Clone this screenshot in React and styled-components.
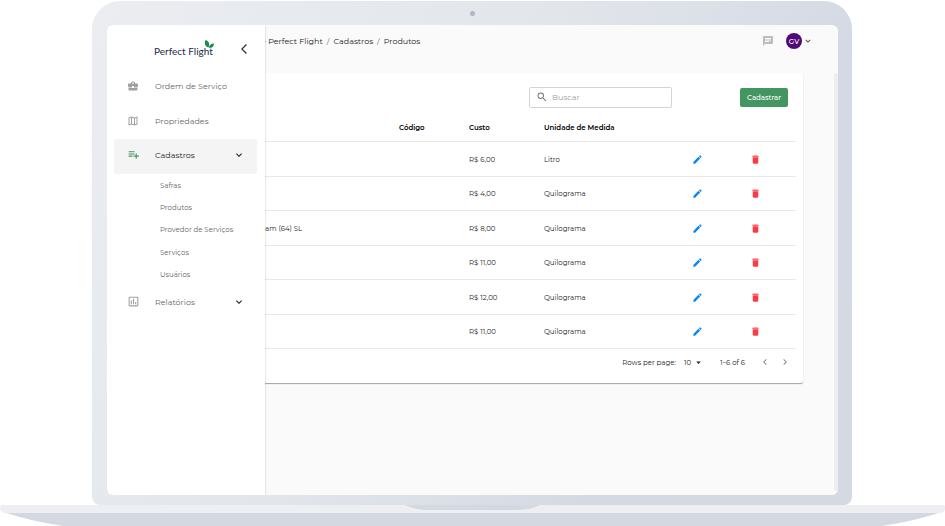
import React, { useState } from 'react';
import styled, { createGlobalStyle } from 'styled-components';
import {
  MdBusinessCenter,
  MdOutlineMap,
  MdPlaylistAdd,
  MdOutlineAssessment,
  MdExpandMore,
  MdArrowBackIosNew,
  MdChat,
  MdSearch,
  MdEdit,
  MdDelete,
  MdArrowDropDown,
  MdChevronLeft,
  MdChevronRight,
} from 'react-icons/md';

const colors = {
  green: '#43965f',
  purple: '#4f0a76',
  blue: '#0d86f0',
  red: '#fb3b41',
  text: '#222222',
  muted: '#666666',
  icon: '#a0a0a0',
  line: '#e8e8e8',
  page: '#fafafa',
};

const GlobalStyle = createGlobalStyle`
  * {
    box-sizing: border-box;
  }

  body {
    margin: 0;
    background-color: #ffffff;
    font-family: Montserrat, Inter, sans-serif;
    font-size: 7px;
    color: ${colors.text};
  }

  button, input, select {
    font-family: inherit;
    font-size: inherit;
    color: inherit;
    margin: 0;
    padding: 0;
    border: 0;
    background: none;
  }

  a {
    color: inherit;
    text-decoration: none;
  }

  svg {
    display: block;
    flex-shrink: 0;
  }
`;

const Laptop = styled.div`
  display: flex;
  flex-direction: column;
  min-height: 100vh;
  padding-top: 1px;
`;

const Lid = styled.div`
  flex: 1;
  display: flex;
  flex-direction: column;
  margin: 0 93px 0 92px;
  padding: 0 14px 10px 15px;
  border-radius: 28px 28px 8px 8px;
  background: linear-gradient(120deg, #ebedf1 0%, #e2e6eb 45%, #d5d9e3 75%, #d4d9e2 100%);
`;

const Bezel = styled.div`
  height: 24px;
  display: flex;
  align-items: center;
  justify-content: center;
`;

const Camera = styled.div`
  width: 5px;
  height: 5px;
  border-radius: 50%;
  background-color: #b2b6c1;
`;

const Screen = styled.div`
  flex: 1;
  display: flex;
  overflow: hidden;
  border-radius: 6px;
  background-color: ${colors.page};
`;

const Base = styled.svg`
  width: 100%;
  height: 21px;
`;

const Sidebar = styled.aside`
  width: 158px;
  flex-shrink: 0;
  padding: 0 8px 0 7px;
  background-color: #ffffff;
  box-shadow: 0 0 2px rgba(0, 0, 0, 0.25);
  z-index: 1;
`;

const Brand = styled.div`
  display: flex;
  align-items: center;
  justify-content: space-between;
  height: 43px;
  padding: 4px 7px 0 39px;
`;

const BrandLink = styled.a`
  display: flex;
`;

const Nav = styled.nav`
  display: flex;
  flex-direction: column;
`;

const NavItem = styled.button`
  display: flex;
  align-items: center;
  width: 100%;
  height: ${props => props.$height || '35px'};
  padding: 0 12px ${props => (props.$active ? '4px' : '0')} 13px;
  border-radius: 2px;
  background-color: ${props => (props.$active ? '#f4f4f4' : 'transparent')};
  color: ${props => (props.$active ? colors.text : colors.muted)};
  font-size: 8px;
  text-align: left;
  cursor: pointer;
`;

const NavIcon = styled.span`
  width: 28px;
  color: ${props => (props.$active ? colors.green : colors.icon)};
`;

const NavLabel = styled.span`
  flex: 1;
`;

const SubNav = styled.div`
  display: grid;
  grid-auto-rows: 1fr;
  align-items: center;
  height: 112px;
  padding-left: 46px;
  color: ${colors.muted};
`;

const Main = styled.main`
  flex: 1;
  min-width: 0;
  display: flex;
  flex-direction: column;
`;

const TopBar = styled.header`
  display: flex;
  align-items: center;
  justify-content: space-between;
  height: 48px;
  padding: 0 25px 16px 0;
`;

/* the drawer covers the start of the trail */
const Breadcrumb = styled.nav`
  display: flex;
  gap: 4px;
  margin-left: -2px;
  font-size: 8px;
  color: ${colors.text};
`;

const Slash = styled.span`
  color: ${colors.muted};
`;

const Account = styled.div`
  display: flex;
  align-items: center;
  gap: 12px;
`;

const AccountButton = styled.button`
  display: flex;
  align-items: center;
  gap: 1px;
  color: #444444;
  cursor: pointer;
`;

const Avatar = styled.span`
  display: flex;
  align-items: center;
  justify-content: center;
  width: 16px;
  height: 16px;
  border-radius: 50%;
  background-color: ${colors.purple};
  color: #ffffff;
  font-weight: 500;
`;

const Content = styled.div`
  flex: 1;
  display: flex;
  align-items: flex-start;
`;

const Panel = styled.section`
  flex: 1;
  min-width: 0;
  margin-right: 31px;
  padding-right: 7px;
  border-radius: 0 2px 2px 0;
  background-color: #ffffff;
  box-shadow: 0 1px 1px rgba(0, 0, 0, 0.35);
`;

const ScrollTrack = styled.div`
  align-self: stretch;
  width: 4px;
  margin-bottom: 4px;
  border-radius: 2px;
  background-color: #eeeeee;
`;

const Toolbar = styled.div`
  display: flex;
  align-items: center;
  justify-content: flex-end;
  gap: 68px;
  height: 40px;
  padding: 8px 8px 0 0;
`;

const SearchBox = styled.label`
  display: flex;
  align-items: center;
  gap: 4px;
  width: 143px;
  height: 21px;
  padding: 0 6px;
  border: 1px solid #d4d4d4;
  border-radius: 2px;
  color: #777777;

  input {
    flex: 1;
    min-width: 0;
    font-size: 8px;
    outline: none;
  }

  input::placeholder {
    color: #a2a2a2;
    opacity: 1;
  }
`;

const AddButton = styled.button`
  width: 48px;
  height: 19px;
  border-radius: 2px;
  background-color: ${colors.green};
  color: #ffffff;
  font-weight: 500;
  cursor: pointer;
`;

const Table = styled.table`
  width: 100%;
  table-layout: fixed;
  border-collapse: separate;
  border-spacing: 0;

  th, td {
    padding: 0;
    border-bottom: 1px solid ${colors.line};
    text-align: left;
    white-space: nowrap;
  }

  th {
    height: 29px;
    color: #000000;
    font-weight: 600;
  }

  tbody tr:nth-child(odd) {
    height: 35px;
  }

  tbody tr:nth-child(even) {
    height: 34px;
  }
`;

const Col = styled.col`
  width: ${props => props.$width || 'auto'};
`;

const IconButton = styled.button`
  display: flex;
  align-items: center;
  justify-content: center;
  color: ${props => props.$color || '#8a8a8a'};
  cursor: pointer;
`;

const Pagination = styled.div`
  display: flex;
  align-items: center;
  justify-content: flex-end;
  height: 34px;
  padding: 0 5px 8px 0;
`;

const RowsSelect = styled.label`
  display: flex;
  align-items: center;

  select {
    appearance: none;
    width: 9px;
    margin-left: 8px;
    outline: none;
  }
`;

const Range = styled.span`
  margin: 0 14px 0 16px;
`;

const Pager = styled.div`
  display: flex;
  gap: 8px;
`;

const subItems = ['Safras', 'Produtos', 'Provedor de Serviços', 'Serviços', 'Usuários'];

const products = [
  { id: 1, name: '', price: 'R$ 6,00', unit: 'Litro' },
  { id: 2, name: '', price: 'R$ 4,00', unit: 'Quilograma' },
  { id: 3, name: 'am (64) SL', price: 'R$ 8,00', unit: 'Quilograma' },
  { id: 4, name: '', price: 'R$ 11,00', unit: 'Quilograma' },
  { id: 5, name: '', price: 'R$ 12,00', unit: 'Quilograma' },
  { id: 6, name: '', price: 'R$ 11,00', unit: 'Quilograma' },
];

function Logo() {
  return (
    <svg width="62" height="20" viewBox="0 0 62 20">
      <text x="1" y="16" fontFamily="Lato, sans-serif" fontSize="10" fill="#252a4c">
        Perfect Flight
      </text>
      <path d="M52.500 1c3.500 1 4.500 4 3 7.500-3.500-1-4.500-4-3-7.500z" fill="#1f8a50" />
      <path d="M61 4.500c0 3-2 4.500-5 4.500 0-3 2-4.500 5-4.500z" fill="#1f8a50" />
    </svg>
  );
}

function SideMenu() {
  const [open, setOpen] = useState(true);

  return (
    <Sidebar>
      <Brand>
        <BrandLink href="#" aria-label="Perfect Flight"><Logo /></BrandLink>
        <IconButton $color="#333333" aria-label="Fechar menu">
          <MdArrowBackIosNew size={12} />
        </IconButton>
      </Brand>
      <Nav>
        <NavItem>
          <NavIcon><MdBusinessCenter size={12} /></NavIcon>
          <NavLabel>Ordem de Serviço</NavLabel>
        </NavItem>
        <NavItem $height="36px">
          <NavIcon><MdOutlineMap size={12} /></NavIcon>
          <NavLabel>Propriedades</NavLabel>
        </NavItem>
        <NavItem $active aria-expanded={open} onClick={() => setOpen(!open)}>
          <NavIcon $active><MdPlaylistAdd size={13} /></NavIcon>
          <NavLabel>Cadastros</NavLabel>
          <MdExpandMore size={12} />
        </NavItem>
        {open && (
          <SubNav>
            {subItems.map(item => <a key={item} href="#">{item}</a>)}
          </SubNav>
        )}
        <NavItem $height="31px">
          <NavIcon><MdOutlineAssessment size={13} /></NavIcon>
          <NavLabel>Relatórios</NavLabel>
          <MdExpandMore size={12} color={colors.text} />
        </NavItem>
      </Nav>
    </Sidebar>
  );
}

function ProductTable() {
  return (
    <Table>
      <colgroup>
        <Col />
        <Col $width="70px" />
        <Col $width="75px" />
        <Col $width="148px" />
        <Col $width="58px" />
        <Col $width="46px" />
      </colgroup>
      <thead>
        <tr>
          <th aria-label="Nome" />
          <th>Código</th>
          <th>Custo</th>
          <th>Unidade de Medida</th>
          <th aria-label="Editar" />
          <th aria-label="Excluir" />
        </tr>
      </thead>
      <tbody>
        {products.map(({ id, name, price, unit }) => (
          <tr key={id}>
            <td>{name}</td>
            <td />
            <td>{price}</td>
            <td>{unit}</td>
            <td>
              <IconButton $color={colors.blue} aria-label="Editar"><MdEdit size={11} /></IconButton>
            </td>
            <td>
              <IconButton $color={colors.red} aria-label="Excluir"><MdDelete size={11} /></IconButton>
            </td>
          </tr>
        ))}
      </tbody>
    </Table>
  );
}

export default function App() {
  const [search, setSearch] = useState('');

  return (
    <>
      <GlobalStyle />
      <Laptop>
        <Lid>
          <Bezel><Camera /></Bezel>
          <Screen>
            <SideMenu />
            <Main>
              <TopBar>
                <Breadcrumb>
                  <a href="#">- Perfect Flight</a>
                  <Slash>/</Slash>
                  <a href="#">Cadastros</a>
                  <Slash>/</Slash>
                  <a href="#">Produtos</a>
                </Breadcrumb>
                <Account>
                  <IconButton $color="#bdbdbd" aria-label="Mensagens"><MdChat size={12} /></IconButton>
                  <AccountButton>
                    <Avatar>GV</Avatar>
                    <MdExpandMore size={10} />
                  </AccountButton>
                </Account>
              </TopBar>
              <Content>
                <Panel>
                  <Toolbar>
                    <SearchBox>
                      <MdSearch size={12} />
                      <input
                        aria-label="Buscar"
                        placeholder="Buscar"
                        value={search}
                        onChange={e => setSearch(e.target.value)}
                      />
                    </SearchBox>
                    <AddButton>Cadastrar</AddButton>
                  </Toolbar>
                  <ProductTable />
                  <Pagination>
                    <RowsSelect>
                      Rows per page:
                      <select defaultValue="10">
                        <option>10</option>
                        <option>25</option>
                      </select>
                      <MdArrowDropDown size={11} />
                    </RowsSelect>
                    <Range>1–6 of 6</Range>
                    <Pager>
                      <IconButton aria-label="Página anterior"><MdChevronLeft size={12} /></IconButton>
                      <IconButton aria-label="Próxima página"><MdChevronRight size={12} /></IconButton>
                    </Pager>
                  </Pagination>
                </Panel>
                <ScrollTrack />
              </Content>
            </Main>
          </Screen>
        </Lid>
        <Base viewBox="0 0 945 21" preserveAspectRatio="none">
          <path d="M3 7H942Q915 16 882 21H63Q30 16 3 7z" fill="#d4d9e1" />
          <path d="M2 0H943Q945 0 945 3Q945 8 940 8H5Q0 8 0 3Q0 0 2 0z" fill="#edeff3" />
          <path d="M405 0H540Q530 5 518 5H427Q415 5 405 0z" fill="#d4d9e1" />
        </Base>
      </Laptop>
    </>
  );
}
